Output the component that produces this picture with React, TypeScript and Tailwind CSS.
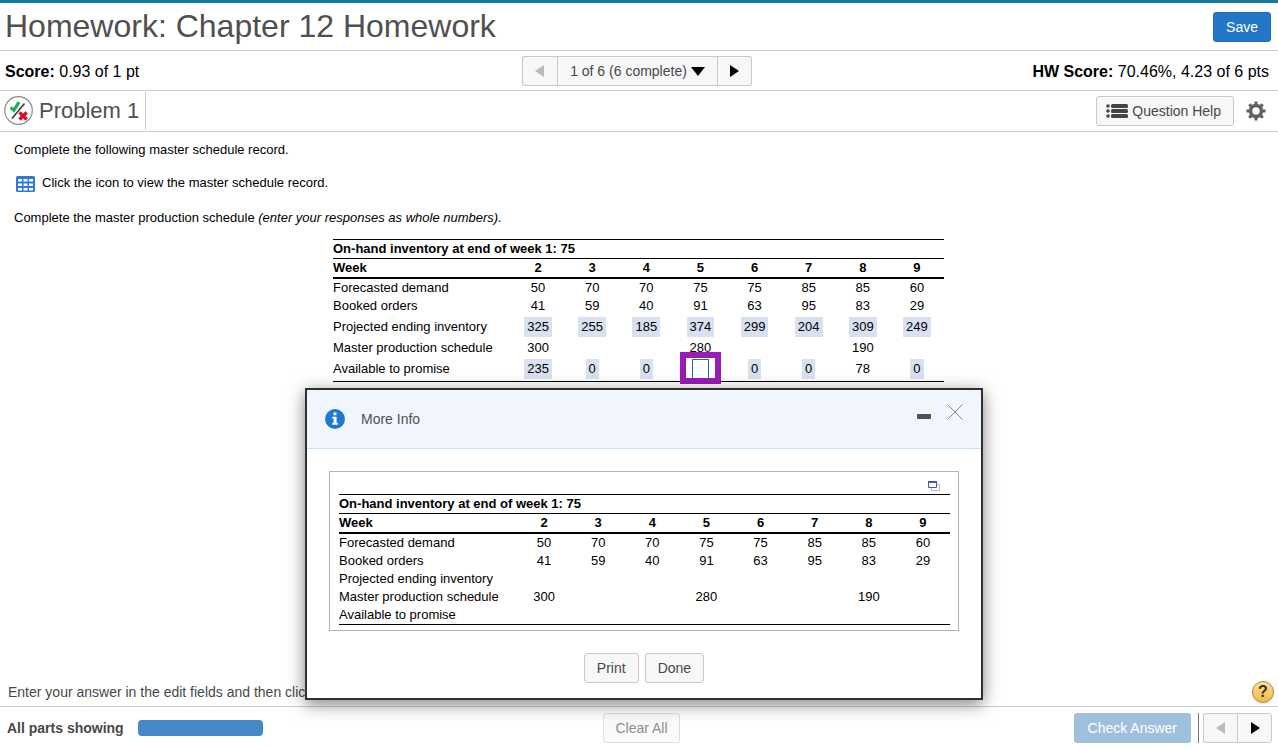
import { useState } from "react";
import clsx from "clsx";

type Cell = { value: string; kind?: "chip" | "input" };
type Row = { label: string; cells: Cell[] };

const weeks = [2, 3, 4, 5, 6, 7, 8, 9];

const plain = (values: string[]): Cell[] => values.map((value) => ({ value }));
const chips = (values: string[]): Cell[] => values.map((value) => ({ value, kind: "chip" }));

const forecast = plain(["50", "70", "70", "75", "75", "85", "85", "60"]);
const booked = plain(["41", "59", "40", "91", "63", "95", "83", "29"]);
const production = plain(["300", "", "", "280", "", "", "190", ""]);
const blank = plain(["", "", "", "", "", "", "", ""]);

const answerRows: Row[] = [
  { label: "Forecasted demand", cells: forecast },
  { label: "Booked orders", cells: booked },
  { label: "Projected ending inventory", cells: chips(["325", "255", "185", "374", "299", "204", "309", "249"]) },
  { label: "Master production schedule", cells: production },
  {
    label: "Available to promise",
    cells: [
      ...chips(["235", "0", "0"]),
      { value: "", kind: "input" },
      ...chips(["0", "0"]),
      { value: "78" },
      ...chips(["0"]),
    ],
  },
];

const recordRows: Row[] = [
  { label: "Forecasted demand", cells: forecast },
  { label: "Booked orders", cells: booked },
  { label: "Projected ending inventory", cells: blank },
  { label: "Master production schedule", cells: production },
  { label: "Available to promise", cells: blank },
];

function ScheduleTable({ rows }: { rows: Row[] }) {
  const [answer, setAnswer] = useState("");

  return (
    <table className="w-[611px] table-fixed border-separate border-spacing-0 text-[13px] leading-[18px] text-black">
      <colgroup>
        <col className="w-[178px]" />
        {weeks.map((w) => <col key={w} />)}
      </colgroup>
      <thead>
        <tr>
          <th colSpan={9} className="border-y border-black p-0 text-left font-bold">
            On-hand inventory at end of week 1: 75
          </th>
        </tr>
        <tr>
          <th className="border-b-2 border-black p-0 text-left font-bold">Week</th>
          {weeks.map((w) => (
            <th key={w} className="border-b-2 border-black p-0 text-center font-bold">{w}</th>
          ))}
        </tr>
      </thead>
      <tbody>
        {rows.map((row, i) => {
          const last = i === rows.length - 1;
          const tall = row.cells.some((c) => c.kind);
          const cellClass = clsx("p-0 align-middle", tall && (last ? "h-[25px]" : "h-6"), last && "border-b border-black");
          return (
            <tr key={row.label}>
              <th scope="row" className={clsx(cellClass, "text-left font-normal")}>{row.label}</th>
              {row.cells.map((c, j) => (
                <td key={j} className={clsx(cellClass, "text-center")}>
                  {c.kind === "chip" && <span className="inline-block h-5 bg-[#d9e0f0] px-[3px] align-top leading-5">{c.value}</span>}
                  {c.kind === "input" && (
                    <span className="relative inline-block h-5 align-top">
                      <input
                        aria-label={`${row.label}, week ${weeks[j]}`}
                        value={answer}
                        onChange={(e) => setAnswer(e.target.value)}
                        className="block h-5 w-[17px] border border-[#137a99] bg-white text-center outline-none"
                      />
                      <span className="pointer-events-none absolute -inset-x-3 -top-[7px] -bottom-[5px] border-6 border-[#9a1cb8]" />
                    </span>
                  )}
                  {!c.kind && c.value}
                </td>
              ))}
            </tr>
          );
        })}
      </tbody>
    </table>
  );
}

function Triangle({ dir, className }: { dir: "left" | "right" | "down"; className?: string }) {
  const points = { left: "11,1 11,13 2,7", right: "3,1 3,13 12,7", down: "0,3 14,3 7,12" }[dir];
  return (
    <svg viewBox="0 0 14 14" className={clsx("size-[14px]", className)} fill="currentColor" aria-hidden="true">
      <polygon points={points} />
    </svg>
  );
}

function PartialIcon() {
  return (
    <svg viewBox="0 0 30 30" className="size-[30px]" fill="none" aria-hidden="true">
      <circle cx="14.5" cy="14.5" r="13.8" fill="#fff" stroke="#8c8c8c" strokeWidth="1.2" />
      <path d="M6.7 11.3l3.2 3L15 6.2" stroke="#21ab58" strokeWidth="3.2" />
      <path d="M8 22.5L20.5 7.5" stroke="#333" strokeWidth="1.5" />
      <path d="M15.5 16.3l7.2 7.2M22.7 16.3l-7.2 7.2" stroke="#dc0a28" strokeWidth="3.2" />
    </svg>
  );
}

function GearIcon() {
  return (
    <svg viewBox="0 0 20 20" className="size-5" fill="none" stroke="#606060" aria-hidden="true">
      <circle cx="10" cy="10" r="5.5" strokeWidth="3.6" />
      {[0, 45, 90, 135].map((a) => (
        <path key={a} d="M10 .4v3.4M10 16.2v3.4" strokeWidth="3" transform={`rotate(${a} 10 10)`} />
      ))}
    </svg>
  );
}

function ListIcon() {
  return (
    <svg viewBox="0 0 22 14" className="h-[14px] w-[22px]" fill="#444" aria-hidden="true">
      {[2, 7, 12].map((y) => (
        <g key={y}>
          <circle cx="2" cy={y} r="1.8" />
          <rect x="5" y={y - 2} width="17" height="4" rx="1.5" />
        </g>
      ))}
    </svg>
  );
}

function GridIcon() {
  return (
    <svg viewBox="0 0 19 16" className="h-4 w-[19px]" aria-hidden="true">
      <rect width="19" height="16" rx="1.5" fill="#3179d6" />
      {[3, 7.5, 12].map((y) =>
        [2, 7.5, 13].map((x) => <rect key={`${x}-${y}`} x={x} y={y} width="4" height="2.5" fill="#fff" />)
      )}
    </svg>
  );
}

function InfoIcon() {
  return (
    <svg viewBox="0 0 20 20" className="size-5" aria-hidden="true">
      <circle cx="10" cy="10" r="10" fill="#1f79cd" />
      <path d="M8.6 3.4h2.8v2.8H8.6zM7.2 7.7h4.4v6.1h1.3v2H7.2v-2h1.4V9.6H7.2z" fill="#fff" />
    </svg>
  );
}

function PopoutIcon() {
  return (
    <svg viewBox="0 0 12 10" className="h-[10px] w-3" aria-hidden="true">
      <path d="M3.5 3.5h8v6h-8z" fill="#fff" stroke="#b3b5df" />
      <path d="M.5 .5h8v6h-8z" fill="#fff" stroke="#4a55a8" />
      <path d="M0 0h9v2H0z" fill="#4a55a8" />
    </svg>
  );
}

const button = "rounded-[3px] border border-[#c8c8c8] bg-[#f7f7f7] text-sm text-[#484848]";

export default function App() {
  return (
    <div className="relative flex min-h-screen flex-col overflow-hidden border-t-3 border-[#137a9c] bg-white font-['Liberation_Sans',Arial,sans-serif]">
      {/* Title */}
      <header className="flex h-12 items-center justify-between border-b border-[#c8ccdc] pr-[7px] pl-[5px]">
        <h1 className="pb-[2px] text-[32px] leading-10 text-[#505050]">Homework: Chapter 12 Homework</h1>
        <button className="h-[30px] rounded-[3px] border border-[#1d6fb8] bg-[#2377c9] px-3 text-sm text-white">Save</button>
      </header>

      {/* Score and question pager */}
      <div className="grid h-10 grid-cols-[1fr_auto_1fr] items-center border-b border-[#c8ccdc] pr-[9px] pl-[5px] text-base text-black">
        <p className="pt-[2px]"><b>Score:</b> 0.93 of 1 pt</p>
        <nav className="flex h-[30px]">
          <button disabled aria-label="Previous question" className={clsx(button, "flex w-[35px] items-center justify-center rounded-r-none border-r-0")}>
            <Triangle dir="left" className="text-[#b9bbbe]" />
          </button>
          <button className={clsx(button, "flex items-center gap-1 rounded-none px-3")}>
            1 of 6 (6 complete)
            <Triangle dir="down" className="text-black" />
          </button>
          <button aria-label="Next question" className={clsx(button, "flex w-[34px] items-center justify-center rounded-l-none border-l-0")}>
            <Triangle dir="right" className="text-black" />
          </button>
        </nav>
        <p className="pt-[2px] text-right"><b>HW Score:</b> 70.46%, 4.23 of 6 pts</p>
      </div>

      {/* Problem bar */}
      <div className="flex h-[41px] items-center justify-between border-b border-[#c8ccdc] pr-3 pl-1">
        <div className="flex h-[38px] items-center gap-[5px] border-r border-[#c8ccdc] pr-[6px]">
          <PartialIcon />
          <h2 className="text-[22px] leading-7 text-[#505050]">Problem 1</h2>
        </div>
        <div className="flex items-center gap-3">
          <button className={clsx(button, "flex h-[30px] items-center gap-1 pr-3 pl-[9px]")}>
            <ListIcon />
            Question Help
          </button>
          <button aria-label="Settings"><GearIcon /></button>
        </div>
      </div>

      <main className="flex-1 px-[14px] pt-[9px] text-[13px] leading-[18px] text-black">
        <p>Complete the following master schedule record.</p>
        <div className="mt-4 flex h-4 items-center gap-[7px] pl-[2px]">
          <button aria-label="View the master schedule record" className="mt-[2px]"><GridIcon /></button>
          <p>Click the icon to view the master schedule record.</p>
        </div>
        <p className="mt-[18px]">
          Complete the master production schedule <i>(enter your responses as whole numbers).</i>
        </p>
        <div className="mt-3 flex justify-center pr-px">
          <ScheduleTable rows={answerRows} />
        </div>
      </main>

      <div className="flex h-7 items-center justify-between pr-1 pl-2 text-sm text-[#484848]">
        <p>Enter your answer in the edit fields and then click Check Answer.</p>
        <button
          aria-label="Help"
          className="size-[22px] rounded-full border border-[#a98b45] bg-linear-to-b from-[#ffe08a] to-[#f2b844] text-base leading-5 font-bold text-[#333] shadow-sm"
        >
          ?
        </button>
      </div>

      <footer className="grid h-[43px] grid-cols-[1fr_auto_1fr] items-center border-t border-[#c8ccdc] pr-[6px] pl-[7px] text-sm">
        <div className="flex items-center gap-[14px]">
          <p className="font-bold text-[#484848]">All parts showing</p>
          <div className="h-4 w-[125px] rounded-[4px] bg-[#4689c9]" />
        </div>
        <button disabled className="ml-1 h-[30px] rounded-[3px] border border-[#dedede] bg-[#fafafa] px-[11px] text-[#8e8e8e]">Clear All</button>
        <div className="flex h-[30px] justify-end">
          <button disabled className="rounded-[3px] bg-[#9fc0dd] px-[14px] text-white">Check Answer</button>
          <div className="mr-1 ml-[7px] border-l border-[#777]" />
          <button disabled aria-label="Previous part" className={clsx(button, "flex w-[34px] items-center justify-center rounded-r-none border-r-0")}>
            <Triangle dir="left" className="text-[#b9bbbe]" />
          </button>
          <button aria-label="Next part" className={clsx(button, "flex w-[35px] items-center justify-center rounded-l-none")}>
            <Triangle dir="right" className="text-black" />
          </button>
        </div>
      </footer>

      {/* Floating record window */}
      <section
        role="dialog"
        aria-labelledby="info-title"
        className="absolute top-[385px] left-[305px] border-2 border-[#303030] bg-white shadow-[0_4px_16px_rgba(0,0,0,0.5)]"
      >
        <div className="flex h-[59px] items-center border-b border-[#c5e2f8] bg-[#f1f6fe] px-[18px]">
          <InfoIcon />
          <h3 id="info-title" className="ml-4 flex-1 text-sm text-[#505050]">More Info</h3>
          <div className="mb-[14px] flex items-center gap-4">
            <button aria-label="Minimize" className="pt-2">
              <svg viewBox="0 0 14 5" className="h-[5px] w-[14px]" aria-hidden="true">
                <rect width="14" height="5" rx="1" fill="#505050" />
              </svg>
            </button>
            <button aria-label="Close">
              <svg viewBox="0 0 16 16" className="size-4" stroke="#888" aria-hidden="true">
                <path d="M.5 .5l15 15M15.5 .5l-15 15" />
              </svg>
            </button>
          </div>
        </div>
        <div className="px-[22px] pt-[22px] pb-[15px]">
          <div className="border border-[#b5b5b5] pr-2 pb-[5px] pl-[9px]">
            <div className="flex h-[22px] items-center justify-end pr-[10px]">
              <button aria-label="Open in new window" className="pt-[6px]"><PopoutIcon /></button>
            </div>
            <ScheduleTable rows={recordRows} />
          </div>
          <div className="mt-[22px] flex justify-center gap-[6px]">
            <button className={clsx(button, "h-[30px] px-3")}>Print</button>
            <button className={clsx(button, "h-[30px] px-3")}>Done</button>
          </div>
        </div>
      </section>
    </div>
  );
}
